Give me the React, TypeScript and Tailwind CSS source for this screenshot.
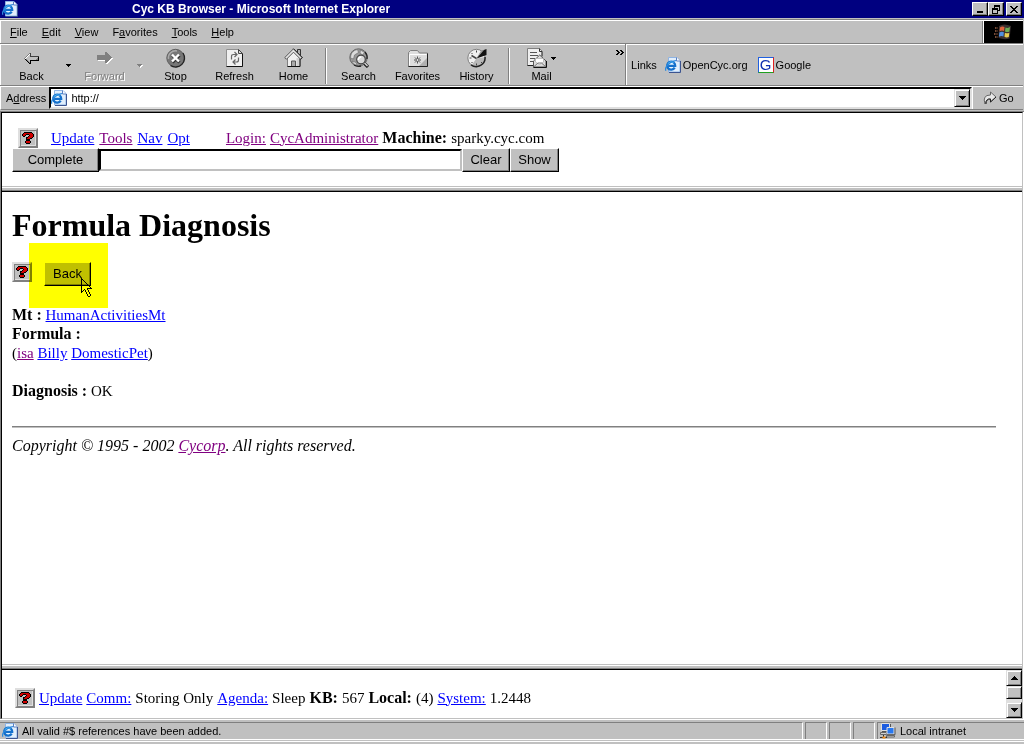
import React from "react";

type Palette = Record<string, string>;

const COLORS: Palette = {
  K: "#000000",
  R: "#d00000",
  D: "#404040",
  G: "#808080",
  L: "#c0c0c0",
  W: "#ffffff",
};

function Pixels({ rows, className = "" }: { rows: string[]; className?: string }) {
  const width = Math.max(...rows.map((r) => r.length));
  return (
    <svg
      width={width}
      height={rows.length}
      viewBox={`0 0 ${width} ${rows.length}`}
      shapeRendering="crispEdges"
      className={`block shrink-0 ${className}`}
      aria-hidden="true"
    >
      {rows.flatMap((row, y) =>
        [...row].map((c, x) =>
          COLORS[c] ? <rect key={`${x}-${y}`} x={x} y={y} width="1" height="1" fill={COLORS[c]} /> : null,
        ),
      )}
    </svg>
  );
}

const QUESTION = [
  "..KKKKKKKK...",
  ".KRRRRRRRRK..",
  "KRRRKKKRRRRK.",
  "KRRK...KRRRK.",
  ".KK...KRRRRK.",
  "....KKRRRRK..",
  "....KRRRKK...",
  "....KKKK.....",
  "....KKKK.....",
  "...KRRRRK....",
  "...KRRRRK....",
  "....KKKK.....",
];

const BACK_ARROW = [
  ".....GD.........",
  "....GWD.........",
  "...GWLD.........",
  "..GWLLDDDDDDDDD.",
  ".GWLLLLLLLLLLLK.",
  "GWLLLLLLLLLLLGK.",
  ".KGLLLLLLLLLGGK.",
  "..KGLLKKKKKKKKK.",
  "...KGLK.........",
  "....KGK.........",
  ".....KK.........",
];

const FORWARD_ARROW = [
  "........GG......",
  "........GGG.....",
  "........GGGG....",
  "GGGGGGGGGGGGG...",
  "GGGGGGGGGGGGGG..",
  "GGGGGGGGGGGGGGG.",
  "GGGGGGGGGGGGGGWW",
  "GGGGGGGGGGGGGWW.",
  ".WWWWWWWGGGGWW..",
  "........GGGWW...",
  "........GGWW....",
  ".........WW.....",
];

const DOWN_SMALL = ["KKKKK", ".KKK.", "..K.."];
const DOWN_DISABLED = ["GGGGG.", ".GGGWW", "..GWW.", "...W.."];
const DOWN = ["KKKKKKK", ".KKKKK.", "..KKK..", "...K..."];
const UP = ["...K...", "..KKK..", ".KKKKK.", "KKKKKKK"];
const MINIMIZE = [".......", ".......", ".......", ".......", ".......", ".......", "KKKKKK.", "KKKKKK."];
const RESTORE = [
  "..KKKKKK",
  "..KKKKKK",
  "..K....K",
  "KKKKKK.K",
  "KKKKKK.K",
  "K....KKK",
  "K....K..",
  "K....K..",
  "KKKKKK..",
];
const CLOSE = ["KK....KK", ".KK..KK.", "..KKKK..", "...KK...", "..KKKK..", ".KK..KK.", "KK....KK"];
const CHEVRON = ["KK..KK..", ".KK..KK.", "..KK..KK", ".KK..KK.", "KK..KK.."];
const CURSOR = [
  "K..........",
  "KK.........",
  "KWK........",
  "KWWK.......",
  "KWWWK......",
  "KWWWWK.....",
  "KWWWWWK....",
  "KWWWWWWK...",
  "KWWWWWWWK..",
  "KWWWWWWWWK.",
  "KWWWWWKKKKK",
  "KWWKWWK....",
  "KWK.KWWK...",
  "KK..KWWK...",
  "K....KWWK..",
  ".....KWWK..",
  "......KWWK.",
  "......KWWK.",
  ".......KK..",
];

function IeIcon() {
  return (
    <svg width="16" height="16" viewBox="0 0 16 16" className="block shrink-0" aria-hidden="true">
      <path d="M3.500 .500h8.500l3 3v11.500H3.500z" fill="#e2effc" stroke="#8fb4e4" />
      <path d="M15.500 4v11.500H4" fill="none" stroke="#3c5490" />
      <path d="M11.500 .500v3.500h3.500" fill="#fff" stroke="#5a7fc0" />
      <circle cx="6.200" cy="8.800" r="3.600" fill="#e8f6ff" />
      <path d="M9.700 10.600A4 4 0 1 1 10.200 8.800H3.500" fill="none" stroke="#1470cc" strokeWidth="2.300" />
      <path d="M3 7.300A3.600 3.600 0 0 1 8.500 5.600" fill="none" stroke="#58bcf4" strokeWidth="1.200" />
      <path d="M1 13.800C-.800 11 4 4.500 11 3.500" fill="none" stroke="#2b8ade" strokeWidth="1.200" />
    </svg>
  );
}

function StopIcon() {
  return (
    <svg width="20" height="20" viewBox="0 0 20 20" className="block" aria-hidden="true">
      <circle cx="9.500" cy="10" r="8.700" fill="#777" stroke="#606060" />
      <path d="M17 5A9 9 0 0 1 4.500 17.500" fill="none" stroke="#222" strokeWidth="1.300" />
      <path d="M2.500 11A7 7 0 0 1 11 3" fill="none" stroke="#aaa" strokeWidth="1.500" />
      <path d="m6.500 7.500 7 7m0-7-7 7" stroke="#333" strokeWidth="3" />
      <path d="m6 6.500 7 7m0-7-7 7" stroke="#fff" strokeWidth="2.400" />
    </svg>
  );
}

function RefreshIcon() {
  return (
    <svg width="20" height="20" viewBox="0 0 20 20" className="block" aria-hidden="true">
      <path d="M1.500 1.500h12l4 4v13h-16z" fill="#f0f0f0" stroke="#909090" />
      <path d="M17.500 5.500v13h-16" fill="none" stroke="#111" />
      <path d="M13.500 1.500v4h4z" fill="#d8d8d8" stroke="#444" />
      <path d="M6.500 11.500V8.500q0-2 2-2h3M9.500 4l2.500 2.500L9.500 9M13.500 9.500v2.500q0 2-2 2h-3m2-2.500L8 14l2.500 2.500" fill="none" stroke="#666" strokeWidth="1.200" />
    </svg>
  );
}

function HomeIcon() {
  return (
    <svg width="20" height="20" viewBox="0 0 20 20" className="block" aria-hidden="true">
      <path d="M13.500 7V1.500h3V10" fill="#b0b0b0" stroke="#333" />
      <path d="M3.500 9.500 9.500 3.500l6.500 6.500v8.500H3.500z" fill="#f0f0f0" stroke="#808080" />
      <path d="M12.500 10h3v8h-3z" fill="#d0d0d0" />
      <path d="M9.500 .800.700 9.600l1.800 1.600 7-7 7 7 1.800-1.600z" fill="#e4e4e4" stroke="#555" />
      <path d="m9.500 .800 8.800 8.800-1.800 1.600" fill="none" stroke="#222" />
      <path d="M7.500 18.500V13h4v5.500" fill="#aaa" stroke="#555" />
      <path d="M3.500 18.500h12.500v-7.500" fill="none" stroke="#111" />
    </svg>
  );
}

function SearchIcon() {
  return (
    <svg width="20" height="20" viewBox="0 0 20 20" className="block" aria-hidden="true">
      <circle cx="9.500" cy="9.500" r="8.700" fill="#999" stroke="#666" />
      <path d="M3 4.500q3-3 5.500-3l1 3-4 2.500-1 4-3-1q0-3 1.500-5.500zM11.500 2l4 2.500-2 2.500-2.500-2zM3 13l4 1.500 1 3q-4-1-5-4.500z" fill="#dcdcdc" stroke="#666" strokeWidth=".6" />
      <path d="M16 4a8.700 8.700 0 0 1 2 7M5 17a9 9 0 0 0 7 1" fill="none" stroke="#222" strokeWidth="1.300" />
      <path d="m15.500 15.500 3.500 3.500" stroke="#222" strokeWidth="3.200" />
      <path d="m15.500 15 3 3" stroke="#ddd" strokeWidth="1.200" />
      <circle cx="12" cy="11.500" r="4.300" fill="#d8d8d8" stroke="#444" strokeWidth="1.200" />
      <path d="M9.300 12a2.800 2.800 0 0 1 3-3" stroke="#fff" strokeWidth="1.600" fill="none" />
    </svg>
  );
}

function FavoritesIcon() {
  return (
    <svg width="20" height="20" viewBox="0 0 20 20" className="block" aria-hidden="true">
      <path d="M.500 18.500v-14l2-2h7l2 2.500h8v13.500z" fill="#dedede" stroke="#808080" />
      <path d="M1.500 17.500V6.500h17" fill="none" stroke="#fff" />
      <path d="M11 18l8-8v8z" fill="#b0b0b0" />
      <path d="M19.500 5.500v13H.500" fill="none" stroke="#222" />
      <path d="M9.500 8.500v7M6 12h7M7 9.500l5 5m0-5-5 5" stroke="#444" strokeWidth=".9" />
      <circle cx="9.500" cy="12" r="1.200" fill="#fff" stroke="#444" strokeWidth=".5" />
    </svg>
  );
}

function HistoryIcon() {
  return (
    <svg width="20" height="20" viewBox="0 0 20 20" className="block" aria-hidden="true">
      <circle cx="9.500" cy="10" r="8.700" fill="#f0f0f0" stroke="#808080" />
      <path d="M9.500 10.500 18 9q0 8-8 9.500-3 0-5-2z" fill="#b8b8b8" />
      <path d="M18 9A8.800 8.800 0 0 1 4 16.800" fill="none" stroke="#222" strokeWidth="1.500" />
      <path d="M9.500 2.500v2M2.500 10h2m5 5.500v2M4.500 5l1 1M4.500 15l1-1m8.500 0 1 1" stroke="#444" />
      <path d="m9.500 10.500 6-8L19.500 1v6z" fill="#111" />
      <path d="m9.500 10.500 4.500-8L17 2z" fill="#999" />
      <path d="m4.500 7.500 5 3" stroke="#444" strokeWidth="1.500" />
    </svg>
  );
}

function MailIcon() {
  return (
    <svg width="20" height="20" viewBox="0 0 20 20" className="block" aria-hidden="true">
      <path d="M.500 .500h12l2.500 2.500v14.500H.500z" fill="#efefef" stroke="#808080" />
      <path d="M12.500 .500v3H15V8" fill="#ccc" stroke="#333" />
      <path d="M.500 17.500h6" stroke="#222" />
      <path d="M3 4.500h7M3 7.500h8M3 10.500h5M3 13.500h3" stroke="#555" />
      <path d="M6.500 13 12.700 7l6.300 6v6H6.500z" fill="#dcdcdc" stroke="#555" />
      <path d="M8.500 14v-3.500h8V14l-4 2.500z" fill="#fff" stroke="#aaa" strokeWidth=".7" />
      <path d="m6.500 19 4.500-4h3.500l4.500 4" fill="none" stroke="#777" />
      <path d="M6.500 19.500h13V13" fill="none" stroke="#111" />
    </svg>
  );
}

function GoIcon() {
  return (
    <svg width="14" height="14" viewBox="0 0 14 14" className="block" aria-hidden="true">
      <path d="M2 13Q-1 4 7.500 4V1l5.500 5-5.500 5V8Q3 7.500 2 13z" fill="#e8e8e8" stroke="#666" />
      <path d="M13 6 7.500 11V8Q3 7.500 3 13" fill="none" stroke="#222" />
    </svg>
  );
}

function WindowsLogo() {
  return (
    <svg width="18" height="18" viewBox="0 0 18 18" className="block" aria-hidden="true">
      <path d="M5 3q5-3 12 0l-1.500 12.500q-5 1.500-11-.5z" fill="#3a3030" />
      <path d="M6 4.500q2-1.500 4.500-.5l-.5 4q-2-1-4.500.200z" fill="#e0643c" />
      <path d="M11.500 4.500q2 1 4.500-.5l-.6 4.500q-2 1-4.400 0z" fill="#6cae54" />
      <path d="M5.400 9.500q2.500-1.300 4.500-.2l-.5 4.200q-2-1-4.500.300z" fill="#5090e0" />
      <path d="M10.900 9.700q2.200 1 4.400 0l-.5 4.300q-2.300 1-4.400-.2z" fill="#e8cc50" />
      <path d="M1 5h3M1 8h3M0 11h3.500M1 14h3" stroke="#a06448" strokeWidth="1.300" strokeDasharray="1.500 1" />
    </svg>
  );
}

function IntranetIcon() {
  return (
    <svg width="16" height="16" viewBox="0 0 16 16" className="block shrink-0" aria-hidden="true">
      <path d="M1.500 .500h8v7h-8z" fill="#1c5ce0" stroke="#e0e0e0" />
      <path d="M10.500 1v4M2 8.500h5" fill="none" stroke="#555" />
      <path d="M.500 9.500h6v2h-6z" fill="#d0d0d0" stroke="#666" />
      <path d="M7 4.500h7v6.500H7z" fill="#2878f0" stroke="#e0e0e0" />
      <path d="M15 4.500v7.200H7" fill="none" stroke="#555" />
      <path d="M6.500 12.500h8v1.500h-8z" fill="#d0d0d0" stroke="#666" />
      <path d="M3.500 12v3M0 14.500h7" stroke="#333" />
      <path d="M2.500 14.500h3" stroke="#f09020" strokeWidth="2" />
    </svg>
  );
}

function HelpButton() {
  return (
    <button
      type="button"
      aria-label="Help"
      className="flex size-5 shrink-0 items-center justify-center border-2 border-t-[#dfdfdf] border-r-[#808080] border-b-[#808080] border-l-[#dfdfdf] bg-[#c0c0c0] shadow-[inset_1px_1px_0_#808080,inset_-1px_-1px_0_#dfdfdf]"
    >
      <Pixels rows={QUESTION} />
    </button>
  );
}

function FormButton({ children, className = "" }: { children: React.ReactNode; className?: string }) {
  return (
    <button
      type="button"
      className={`h-6 border border-t-white border-r-black border-b-black border-l-white bg-[#c0c0c0] font-['Liberation_Sans',Arial,sans-serif] text-[13px] leading-5 shadow-[inset_-1px_-1px_0_#808080] ${className}`}
    >
      {children}
    </button>
  );
}

function CaptionButton({ label, rows }: { label: string; rows: string[] }) {
  return (
    <button
      type="button"
      aria-label={label}
      className="flex h-[14px] w-4 items-center justify-center border border-t-white border-r-black border-b-black border-l-white bg-[#c0c0c0] shadow-[inset_-1px_-1px_0_#808080]"
    >
      <Pixels rows={rows} />
    </button>
  );
}

function ToolButton({ label, children, disabled = false }: { label: string; children: React.ReactNode; disabled?: boolean }) {
  return (
    <button
      type="button"
      disabled={disabled}
      className={`flex w-[59px] shrink-0 flex-col items-center gap-px ${disabled ? "text-[#808080] [text-shadow:1px_1px_0_#fff]" : ""}`}
    >
      <span className="flex h-5 items-center justify-center gap-1">{children}</span>
      <span className="leading-[14px]">{label}</span>
    </button>
  );
}

function Separator() {
  return <div className="mx-0.5 h-9 w-0.5 shrink-0 border-r border-l border-r-white border-l-[#808080]" />;
}

function Link({ children, visited = false }: { children: React.ReactNode; visited?: boolean }) {
  return (
    <a href="#" className={`underline ${visited ? "text-[#800080]" : "text-[#0000ff]"}`}>
      {children}
    </a>
  );
}

function Label({ children }: { children: React.ReactNode }) {
  return <b className="text-[16px] leading-4">{children}</b>;
}

function FrameDivider() {
  return (
    <div className="shrink-0">
      <div className="h-px bg-[#c0c0c0]" />
      <div className="h-px bg-white" />
      <div className="h-0.5 bg-[#c0c0c0]" />
      <div className="h-px bg-[#808080]" />
      <div className="h-px bg-black" />
    </div>
  );
}

const MENUS: [string, string, string][] = [
  ["", "F", "ile"],
  ["", "E", "dit"],
  ["", "V", "iew"],
  ["F", "a", "vorites"],
  ["", "T", "ools"],
  ["", "H", "elp"],
];

const SCROLL_BUTTON =
  "flex w-full items-center justify-center border border-t-[#dfdfdf] border-r-black border-b-black border-l-[#dfdfdf] bg-[#c0c0c0] shadow-[inset_1px_1px_0_#fff,inset_-1px_-1px_0_#808080]";

export default function App() {
  return (
    <div className="flex h-screen flex-col bg-[#c0c0c0] font-['Liberation_Sans',Arial,sans-serif] text-[11px] leading-[14px] text-black">
      <header className="shrink-0">
        <div className="flex h-[18px] items-center bg-[#000080] pr-0.5 pl-0.5">
          <IeIcon />
          <h1 className="flex-1 pl-[114px] text-[12px] font-bold text-white">Cyc KB Browser - Microsoft Internet Explorer</h1>
          <div className="flex">
            <CaptionButton label="Minimize" rows={MINIMIZE} />
            <CaptionButton label="Restore" rows={RESTORE} />
            <div className="w-0.5" />
            <CaptionButton label="Close" rows={CLOSE} />
          </div>
        </div>

        <div className="mt-px mr-px border-t border-[#808080]">
          <nav className="flex h-[23px] border-t border-l border-white" aria-label="Menu bar">
            <div className="flex flex-1 items-center pl-0.5">
              {MENUS.map(([before, key, after]) => (
                <button type="button" key={key + after} className="px-[7px]">
                  {before}
                  <span className="underline">{key}</span>
                  {after}
                </button>
              ))}
            </div>
            <div className="flex w-[41px] items-center justify-center border-l border-l-[#808080] bg-black shadow-[inset_1px_0_0_#fff]">
              <WindowsLogo />
            </div>
          </nav>

          <div className="flex h-[43px] border-t border-b border-[#808080]">
            <div className="flex flex-1 items-center border-t border-l border-white pt-px pl-px">
              <ToolButton label="Back">
                <Pixels rows={BACK_ARROW} />
              </ToolButton>
              <button type="button" aria-label="Back history" className="flex w-[14px] justify-center">
                <Pixels rows={DOWN_SMALL} />
              </button>
              <ToolButton label="Forward" disabled>
                <Pixels rows={FORWARD_ARROW} />
              </ToolButton>
              <button type="button" aria-label="Forward history" disabled className="flex w-[12px] justify-center">
                <Pixels rows={DOWN_DISABLED} />
              </button>
              <ToolButton label="Stop"><StopIcon /></ToolButton>
              <ToolButton label="Refresh"><RefreshIcon /></ToolButton>
              <ToolButton label="Home"><HomeIcon /></ToolButton>
              <Separator />
              <ToolButton label="Search"><SearchIcon /></ToolButton>
              <ToolButton label="Favorites"><FavoritesIcon /></ToolButton>
              <ToolButton label="History"><HistoryIcon /></ToolButton>
              <Separator />
              <ToolButton label="Mail">
                <MailIcon />
                <Pixels rows={DOWN_SMALL} />
              </ToolButton>
              <button type="button" aria-label="More tools" className="mt-1 mr-0.5 ml-auto self-start">
                <Pixels rows={CHEVRON} />
              </button>
            </div>
            <div className="flex w-[38.8%] items-center border-t border-l border-white pl-1 shadow-[-1px_0_0_#808080]">
              <span>Links</span>
              <a href="#" className="ml-2 flex items-center gap-0.5">
                <IeIcon />
                OpenCyc.org
              </a>
              <a href="#" className="ml-2.5 flex items-center gap-0.5">
                <span className="flex size-4 items-center justify-center border border-t-[#2060e0] border-r-[#e02020] border-b-[#20a020] border-l-[#2060e0] bg-white text-[15px] leading-[14px] text-[#1030b0]">
                  G
                </span>
                Google
              </a>
            </div>
          </div>

          <div className="flex h-6 border-t border-b border-l border-t-white border-b-[#808080] border-l-white">
            <label htmlFor="address" className="flex items-center pr-[3px] pl-[5px]">
              <span>A<span className="underline">d</span>dress</span>
            </label>
            <div className="flex flex-1 items-center border-2 border-t-black border-r-[#dfdfdf] border-b-[#dfdfdf] border-l-black bg-white">
              <IeIcon />
              <input id="address" type="text" defaultValue="http://" className="min-w-0 flex-1 bg-transparent pl-1 outline-none" />
              <button
                type="button"
                aria-label="Address list"
                className="flex w-4 items-center justify-center self-stretch border border-t-[#dfdfdf] border-r-black border-b-black border-l-[#dfdfdf] bg-[#c0c0c0] shadow-[inset_1px_1px_0_#fff,inset_-1px_-1px_0_#808080]"
              >
                <Pixels rows={DOWN} />
              </button>
            </div>
            <button type="button" className="flex w-[51px] items-center gap-0.5 border-l border-white pl-2.5">
              <GoIcon />
              Go
            </button>
          </div>
        </div>
      </header>

      <div className="mt-px flex min-h-0 flex-1 flex-col border-t border-l border-[#808080] bg-white">
        <div className="mr-px flex min-h-0 flex-1 flex-col border-t border-r border-b border-l border-t-black border-r-[#c0c0c0] border-b-[#c0c0c0] border-l-black font-['Liberation_Serif','Times_New_Roman',serif] text-[15px] leading-[19px]">
          <section className="shrink-0 pt-[15px] pb-[14px] pl-2.5">
            <div className="flex items-center pl-1.5 whitespace-nowrap">
              <HelpButton />
              <div className="ml-[13px] flex items-baseline gap-9">
                <p className="flex items-baseline gap-[5px]">
                  <Link>Update</Link>
                  <Link visited>Tools</Link>
                  <Link>Nav</Link>
                  <Link>Opt</Link>
                </p>
                <p className="flex items-baseline gap-1">
                  <Link visited>Login:</Link>
                  <Link visited>CycAdministrator</Link>
                  <Label>Machine:</Label>
                  <span>sparky.cyc.com</span>
                </p>
              </div>
            </div>
            <div className="flex items-center">
              <FormButton className="w-[87px]">Complete</FormButton>
              <input
                type="text"
                aria-label="Complete text"
                className="h-[22px] w-[363px] border-2 border-t-black border-r-[#c0c0c0] border-b-[#c0c0c0] border-l-black bg-white px-1 outline-none"
              />
              <FormButton className="w-12">Clear</FormButton>
              <FormButton className="w-[49px]">Show</FormButton>
            </div>
          </section>

          <FrameDivider />

          <main className="min-h-0 flex-1 overflow-hidden pt-[15px] pr-[26px] pl-2.5">
            <h2 className="text-[32px] leading-[37px] font-bold">Formula Diagnosis</h2>
            <div className="mt-[18px] flex items-start gap-3">
              <HelpButton />
              <div className="relative">
                <FormButton className="w-[47px]">Back</FormButton>
                <div className="pointer-events-none absolute -top-[19px] -left-[15px] h-[65px] w-[79px] bg-[#ffff00] mix-blend-multiply" />
                <div className="pointer-events-none absolute top-4 left-[37px] mix-blend-multiply">
                  <Pixels rows={CURSOR} />
                </div>
              </div>
            </div>
            <div className="mt-5">
              <p><Label>Mt :</Label> <Link>HumanActivitiesMt</Link></p>
              <p><Label>Formula :</Label></p>
              <p>(<Link visited>isa</Link> <Link>Billy</Link> <Link>DomesticPet</Link>)</p>
              <p className="mt-[19px]"><Label>Diagnosis :</Label> OK</p>
            </div>
            <hr className="mt-[25px] mb-2 h-0.5 border-t border-b border-t-[#808080] border-b-[#c0c0c0]" />
            <p className="text-[16px] leading-[19px] italic">
              Copyright © 1995 - 2002 <Link visited>Cycorp</Link>. All rights reserved.
            </p>
          </main>

          <FrameDivider />

          <footer className="flex h-12 shrink-0">
            <div className="flex flex-1 items-center gap-1 pt-2 pl-[13px] whitespace-nowrap">
              <HelpButton />
              <p className="flex items-baseline gap-1">
                <Link>Update</Link>
                <Link>Comm:</Link>
                <span>Storing Only</span>
                <Link>Agenda:</Link>
                <span>Sleep</span>
                <Label>KB:</Label>
                <span>567</span>
                <Label>Local:</Label>
                <span>(4)</span>
                <Link>System:</Link>
                <span>1.2448</span>
              </p>
            </div>
            <div className="flex w-4 flex-col bg-[#dfdfdf]">
              <button type="button" aria-label="Scroll up" className={`h-4 ${SCROLL_BUTTON}`}>
                <Pixels rows={UP} />
              </button>
              <div className={`h-[13px] ${SCROLL_BUTTON}`} />
              <button type="button" aria-label="Scroll down" className={`mt-auto h-4 ${SCROLL_BUTTON}`}>
                <Pixels rows={DOWN} />
              </button>
            </div>
          </footer>
        </div>
      </div>

      <div className="shrink-0 border-t border-white pt-0.5 pb-0.5">
        <div className="flex h-[18px] gap-0.5 border-b border-white">
          <div className="flex flex-1 items-center gap-1 border-t border-r border-t-[#808080] border-r-white pl-0.5">
            <IeIcon />
            All valid #$ references have been added.
          </div>
          <div className="w-[22px] border-t border-r border-l border-t-[#808080] border-r-white border-l-[#808080]" />
          <div className="w-[22px] border-t border-r border-l border-t-[#808080] border-r-white border-l-[#808080]" />
          <div className="w-[22px] border-t border-r border-l border-t-[#808080] border-r-white border-l-[#808080]" />
          <div className="flex w-[147px] items-center gap-1 border-t border-l border-[#808080] pl-0.5">
            <IntranetIcon />
            Local intranet
          </div>
        </div>
        <div className="mt-px h-px bg-white" />
      </div>
    </div>
  );
}
